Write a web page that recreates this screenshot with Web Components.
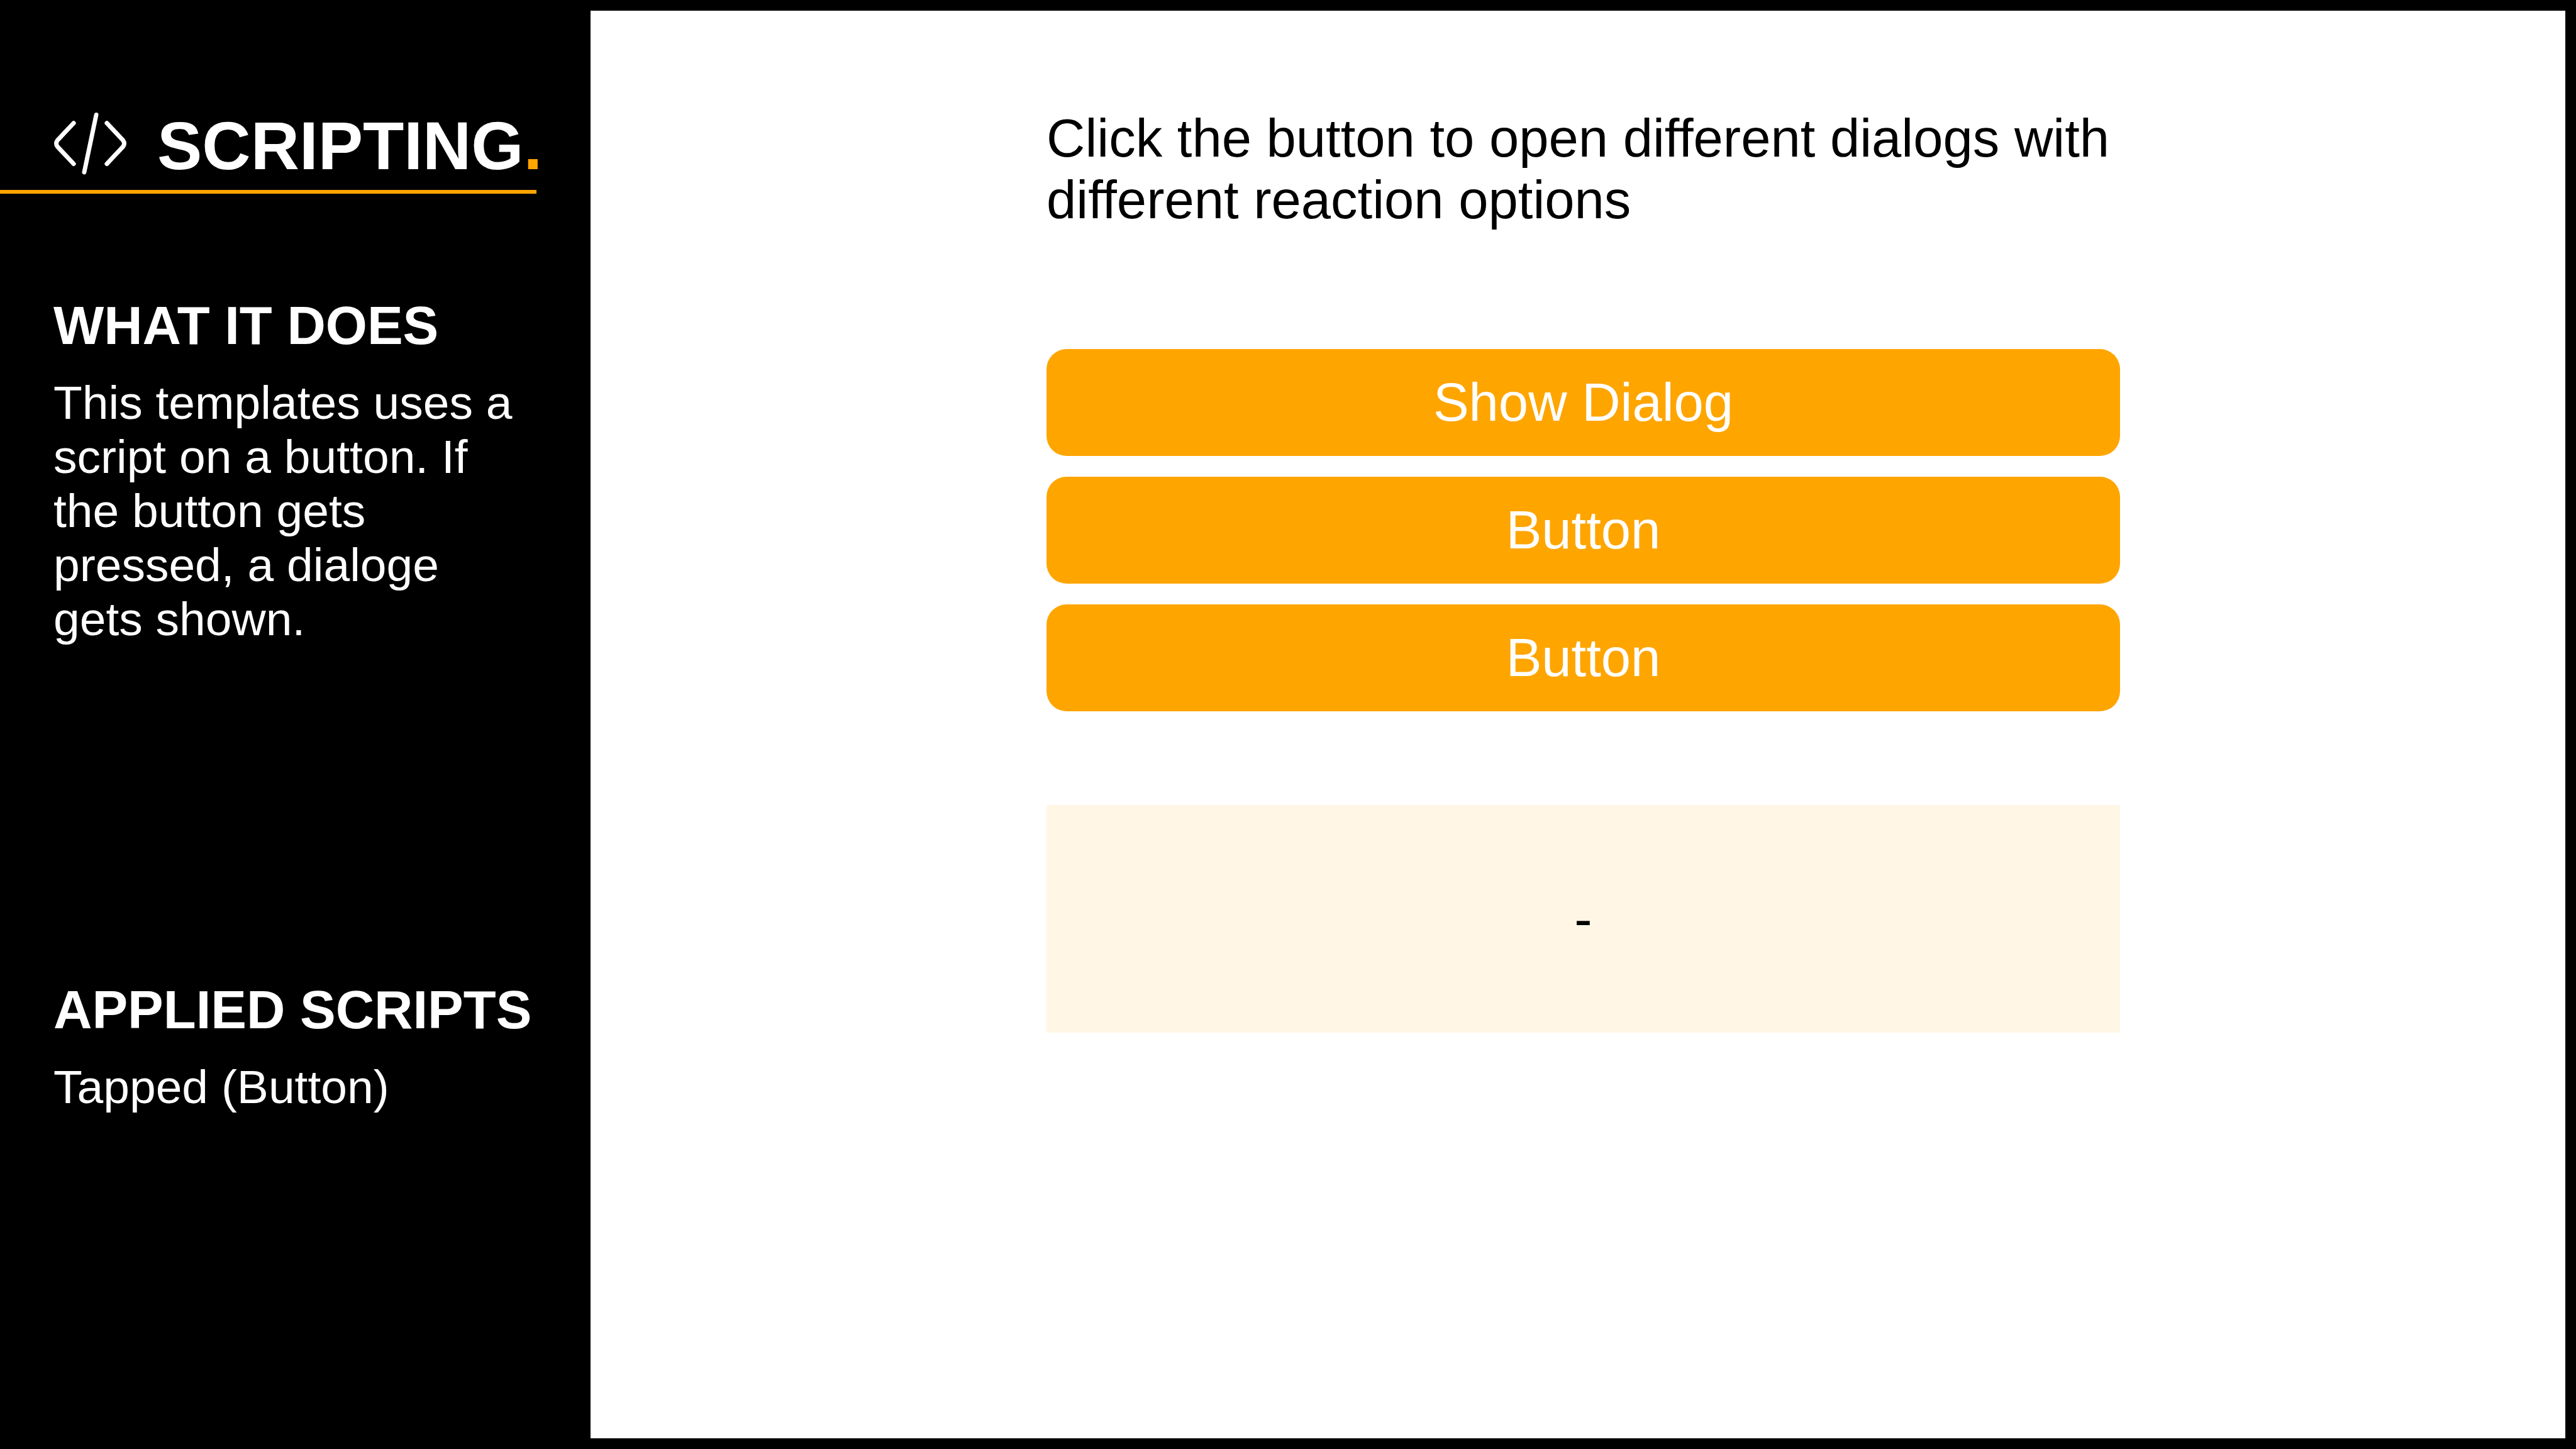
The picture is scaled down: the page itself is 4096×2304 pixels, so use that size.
<!DOCTYPE html>
<html lang="en">
<head>
<meta charset="utf-8">
<title>Scripting</title>
<style>
  html, body { margin: 0; min-height: 100%; background: #000; }
  body { font-family: "Liberation Sans", Arial, sans-serif; }
</style>
</head>
<body>
<template-page>
  <side-panel slot="side">
    <page-brand slot="brand">SCRIPTING</page-brand>
    <info-section heading="WHAT IT DOES">This templates uses a script on a button. If the button gets pressed, a dialoge gets shown.</info-section>
    <info-section heading="APPLIED SCRIPTS">Tapped (Button)</info-section>
  </side-panel>
  <dialog-demo>
    <span slot="intro">Click the button to open different dialogs with different reaction options</span>
    <action-button slot="actions">Show Dialog</action-button>
    <action-button slot="actions">Button</action-button>
    <action-button slot="actions">Button</action-button>
    <result-box slot="result">-</result-box>
  </dialog-demo>
</template-page>

<script>
  const define = (name, html) => {
    customElements.define(name, class extends HTMLElement {
      constructor() {
        super();
        const template = document.createElement('template');
        template.innerHTML = html;
        this.attachShadow({ mode: 'open' }).append(template.content.cloneNode(true));
      }
      connectedCallback() {
        const heading = this.shadowRoot.querySelector('[data-heading]');
        if (heading) heading.textContent = this.getAttribute('heading');
      }
    });
  };

  define('template-page', `
    <style>
      :host { display: grid; grid-template-columns: 939px 1fr; box-sizing: border-box;
              min-height: 100vh; padding: 17px 17px 17px 0; background: #000; }
      main { background: #fff; color: #000; }
    </style>
    <slot name="side"></slot>
    <main><slot></slot></main>`);

  define('side-panel', `
    <style>
      :host { display: block; color: #fff; }
      nav { display: flex; flex-direction: column; gap: 530px; padding: 161px 86px 0 85px; }
    </style>
    <slot name="brand"></slot>
    <nav><slot></slot></nav>`);

  define('page-brand', `
    <style>
      :host { display: flex; align-items: flex-start; gap: 48px; margin-right: 86px;
              padding: 161px 0 16px 85px; border-bottom: 6px solid #ffa500; }
      svg { flex: none; width: 117px; height: 100px; }
      h1 { margin: 0; font-size: 107px; line-height: 108px; font-weight: 700; white-space: nowrap; }
      .dot { color: #ffa500; }
    </style>
    <svg viewBox="320 128 440 375" fill="none" stroke="#fff" stroke-width="26" stroke-linecap="round" aria-hidden="true">
      <path d="M441 194 344 297Q330 316 344 335L441 438"/>
      <path d="M576 144 504 488"/>
      <path d="M639 194 736 297Q750 316 736 335L639 438"/>
    </svg>
    <h1><slot></slot><span class="dot">.</span></h1>`);

  define('info-section', `
    <style>
      :host { display: flex; flex-direction: column; gap: 30px; }
      h2 { margin: 0; font-size: 85px; line-height: 98px; font-weight: 700; white-space: nowrap; }
      p { margin: 0; font-size: 75px; line-height: 86px; }
    </style>
    <h2 data-heading></h2>
    <p><slot></slot></p>`);

  define('dialog-demo', `
    <style>
      :host { display: block; padding: 154px 708px 0 725px; }
      p { margin: 0 0 188px; font-size: 85px; line-height: 98px; }
      .actions { display: flex; flex-direction: column; gap: 33px; margin-bottom: 149px; }
    </style>
    <p><slot name="intro"></slot></p>
    <div class="actions"><slot name="actions"></slot></div>
    <slot name="result"></slot>`);

  define('action-button', `
    <style>
      :host { display: block; }
      button { display: block; width: 100%; height: 170px; margin: 0; padding: 0; border: 0;
               border-radius: 32px; background: #ffa500; color: #fff; font: inherit;
               font-size: 85px; line-height: 98px; cursor: pointer; }
    </style>
    <button type="button"><slot></slot></button>`);

  define('result-box', `
    <style>
      :host { display: flex; align-items: center; justify-content: center; height: 362px;
              background: #fff6e5; font-size: 85px; line-height: 98px; }
    </style>
    <output><slot></slot></output>`);
</script>
</body>
</html>
